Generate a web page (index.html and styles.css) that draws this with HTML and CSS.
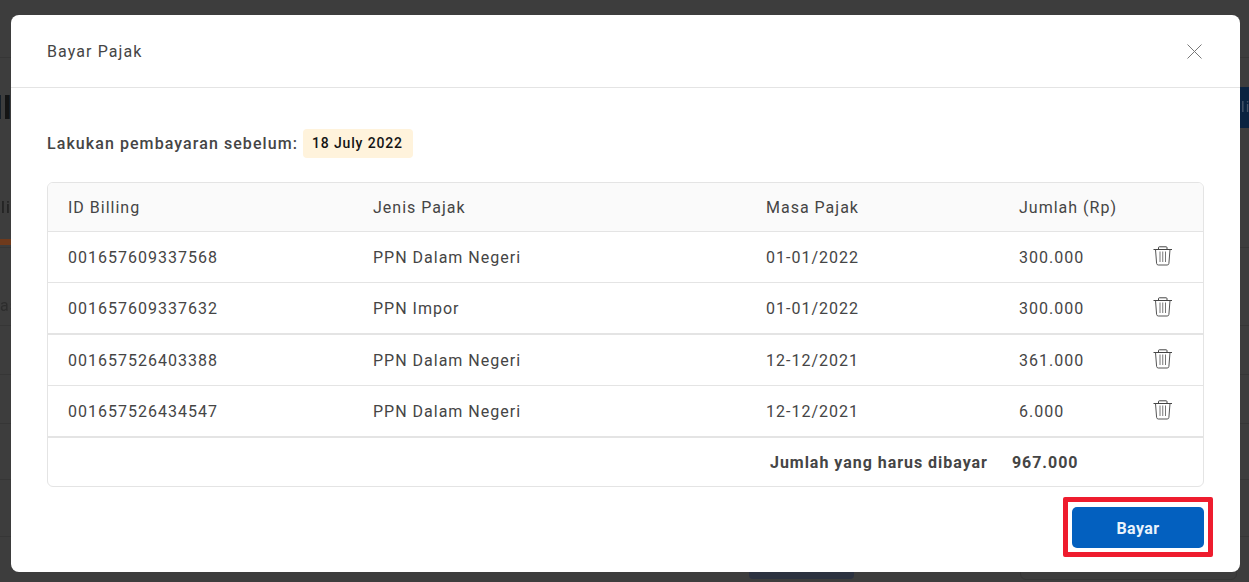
FILE: index.html
```html
<!DOCTYPE html>
<html lang="en">
<head>
  <meta charset="UTF-8">
  <title>Bayar Pajak</title>
  <link rel="stylesheet" href="styles.css">
</head>
<body>
  <!-- Page behind the dialog, only its edges show -->
  <div class="backdrop">
    <div class="bg-line bg-line-1"></div>
    <div class="bg-line bg-line-2"></div>
    <div class="bg-line bg-line-3"></div>
    <div class="bg-line bg-line-4"></div>
    <div class="bg-line bg-line-5"></div>
    <div class="bg-line bg-line-6"></div>
    <div class="bg-line bg-line-7"></div>
    <div class="bg-block"></div>
    <div class="bg-text bg-text-li">li</div>
    <div class="bg-bar"></div>
    <div class="bg-text bg-text-as">as</div>
    <div class="bg-navy">li</div>
    <div class="bg-purple"></div>
    <div class="bg-card"></div>
  </div>

  <div class="modal">
    <div class="modal-header">
      <span class="modal-title">Bayar Pajak</span>
      <svg class="close-icon" width="15" height="15" viewBox="0 0 15 15">
        <path d="M0.5 0.5 L14.5 14.5 M14.5 0.5 L0.5 14.5" fill="none" stroke="#777" stroke-width="1"/>
      </svg>
    </div>

    <div class="modal-body">
      <div class="deadline">
        <span class="deadline-label">Lakukan pembayaran sebelum:</span>
        <span class="deadline-date">18 July 2022</span>
      </div>

      <div class="table-wrap">
        <table class="bill-table">
          <colgroup>
            <col class="col-id">
            <col class="col-jenis">
            <col class="col-masa">
            <col class="col-jumlah">
            <col class="col-action">
          </colgroup>
          <thead>
            <tr>
              <th>ID Billing</th>
              <th>Jenis Pajak</th>
              <th>Masa Pajak</th>
              <th>Jumlah (Rp)</th>
              <th></th>
            </tr>
          </thead>
          <tbody>
            <tr>
              <td>001657609337568</td>
              <td>PPN Dalam Negeri</td>
              <td>01-01/2022</td>
              <td>300.000</td>
              <td class="action"><svg class="trash-icon" width="20" height="20" viewBox="0 0 20 20"><use href="#trash"/></svg></td>
            </tr>
            <tr class="row-split">
              <td>001657609337632</td>
              <td>PPN Impor</td>
              <td>01-01/2022</td>
              <td>300.000</td>
              <td class="action"><svg class="trash-icon" width="20" height="20" viewBox="0 0 20 20"><use href="#trash"/></svg></td>
            </tr>
            <tr>
              <td>001657526403388</td>
              <td>PPN Dalam Negeri</td>
              <td>12-12/2021</td>
              <td>361.000</td>
              <td class="action"><svg class="trash-icon" width="20" height="20" viewBox="0 0 20 20"><use href="#trash"/></svg></td>
            </tr>
            <tr class="row-split">
              <td>001657526434547</td>
              <td>PPN Dalam Negeri</td>
              <td>12-12/2021</td>
              <td>6.000</td>
              <td class="action"><svg class="trash-icon" width="20" height="20" viewBox="0 0 20 20"><use href="#trash"/></svg></td>
            </tr>
          </tbody>
        </table>
        <div class="total-row">
          <span class="total-label">Jumlah yang harus dibayar</span>
          <span class="total-value">967.000</span>
        </div>
      </div>

      <div class="modal-actions">
        <div class="highlight">
          <button class="pay-button">Bayar</button>
        </div>
      </div>
    </div>
  </div>

  <svg class="icon-defs" width="0" height="0">
    <symbol id="trash" viewBox="0 0 20 20">
      <path d="M0.5 3.5 H19 M5.5 3.5 V1.6 Q5.5 0.8 6.3 0.8 H13.2 Q14 0.8 14 1.6 V3.5" fill="none" stroke="#444" stroke-width="1"/>
      <path d="M2.5 3.5 L3.6 17.4 Q3.8 19 5.3 19 H14.2 Q15.7 19 15.9 17.4 L17 3.5" fill="none" stroke="#555" stroke-width="1"/>
      <path d="M7 5.5 V16 M9.75 5.5 V16 M12.5 5.5 V16" fill="none" stroke="#777" stroke-width="1"/>
    </symbol>
  </svg>
</body>
</html>
```

FILE: styles.css
```css
/* Basic page styling */
html, body {
  height: 100%;
}
body {
  margin: 0;
  background: #3d3d3d;
  color: #454545;
  font-family: Roboto, "Liberation Sans", sans-serif;
  font-size: 16px;
  overflow: hidden;
}

/* Dimmed page behind the dialog */
.backdrop {
  position: fixed;
  inset: 0;
  overflow: hidden;
}
.bg-line {
  position: absolute;
  left: 0;
  right: 0;
  height: 1px;
  background: #363636;
}
.bg-line-1 { top: 57px; }
.bg-line-2 { top: 247px; }
.bg-line-3 { top: 325px; }
.bg-line-4 { top: 374px; }
.bg-line-5 { top: 423px; }
.bg-line-6 { top: 479px; }
.bg-line-7 { top: 536px; }
.bg-block {
  position: absolute;
  left: 0;
  top: 95px;
  width: 10px;
  height: 24px;
  background: repeating-linear-gradient(90deg, #16202a 0, #16202a 1px, #3d3d3d 1px, #3d3d3d 5px, #141414 5px, #141414 9px, #3d3d3d 9px);
}
.bg-text {
  position: absolute;
  left: 1px;
  font-size: 16px;
  letter-spacing: 1px;
}
.bg-text-li {
  top: 198px;
  color: #1c1c1c;
}
.bg-text-as {
  top: 296px;
  left: 0;
  color: #2d2d2d;
}
.bg-bar {
  position: absolute;
  left: 0;
  top: 239px;
  width: 11px;
  height: 6px;
  background: #6f3a1c;
}
.bg-navy {
  position: absolute;
  left: 1240px;
  top: 87px;
  width: 9px;
  height: 41px;
  padding-left: 1px;
  box-sizing: border-box;
  background: #0a2340;
  color: #46566a;
  font-size: 15px;
  line-height: 41px;
  letter-spacing: 1px;
}
.bg-purple {
  position: absolute;
  left: 749px;
  top: 560px;
  width: 105px;
  height: 19px;
  border-radius: 4px;
  background: #2c3240;
}
.bg-card {
  position: absolute;
  left: 1020px;
  top: 560px;
  width: 215px;
  height: 18px;
  border: 1px solid #363636;
  border-radius: 6px;
}

/* Dialog */
.modal {
  position: absolute;
  left: 11px;
  top: 15px;
  width: 1229px;
  height: 557px;
  background: #fff;
  border-radius: 8px;
}
.modal-header {
  display: flex;
  align-items: center;
  justify-content: space-between;
  height: 72px;
  padding: 0 38px 0 36px;
  border-bottom: 1px solid #e4e4e4;
}
.modal-title {
  font-size: 16px;
  font-weight: 400;
  letter-spacing: 1.1px;
}
.close-icon {
  margin-top: 1px;
}
.modal-body {
  padding: 41px 36px 0;
}

/* Deadline line */
.deadline {
  display: flex;
  align-items: center;
  gap: 5px;
  height: 29px;
}
.deadline-label {
  font-size: 16px;
  font-weight: 500;
  letter-spacing: 1.07px;
}
.deadline-date {
  padding: 0 10px 0 9px;
  line-height: 29px;
  background: #fff3dc;
  border-radius: 4px;
  color: #141414;
  font-size: 14px;
  font-weight: 500;
  letter-spacing: 0.85px;
}

/* Billing table */
.table-wrap {
  margin-top: 24px;
  border: 1px solid #e4e4e4;
  border-radius: 6px;
  overflow: hidden;
}
.bill-table {
  width: 100%;
  border-collapse: collapse;
  table-layout: fixed;
}
.col-id {
  width: 305px;
}
.col-jenis {
  width: 393px;
}
.col-masa {
  width: 253px;
}
.col-jumlah {
  width: 134px;
}
.bill-table th,
.bill-table td {
  padding: 0 0 0 20px;
  text-align: left;
  font-size: 16px;
  letter-spacing: 1px;
}
.bill-table th {
  height: 48px;
  background: #fafafa;
  font-weight: 400;
  border-bottom: 1px solid #e4e4e4;
}
.bill-table td {
  height: 50px;
  border-bottom: 1px solid #e4e4e4;
}
.bill-table .row-split td {
  border-bottom-width: 2px;
}
.bill-table td.action {
  padding: 0;
}
.trash-icon {
  display: block;
  margin: -2px 0 0 20px;
}
.icon-defs {
  position: absolute;
}

/* Total line */
.total-row {
  display: flex;
  align-items: center;
  height: 48px;
  padding-left: 722px;
  font-weight: 700;
  letter-spacing: 0.97px;
}
.total-value {
  margin-left: 24px;
}

/* Action button */
.modal-actions {
  display: flex;
  justify-content: flex-end;
  margin: 10px -9px 0 0;
}
.highlight {
  padding: 5px 4px 4px;
  border: 5px solid #ee1c2e;
  border-radius: 2px;
}
.pay-button {
  display: block;
  width: 132px;
  height: 41px;
  padding: 2px 0 0;
  border: 0;
  border-radius: 5px;
  background: #0360bf;
  color: #eaf3fb;
  font-family: Roboto, "Liberation Sans", sans-serif;
  font-size: 16px;
  font-weight: 700;
  letter-spacing: 0.4px;
}
```
